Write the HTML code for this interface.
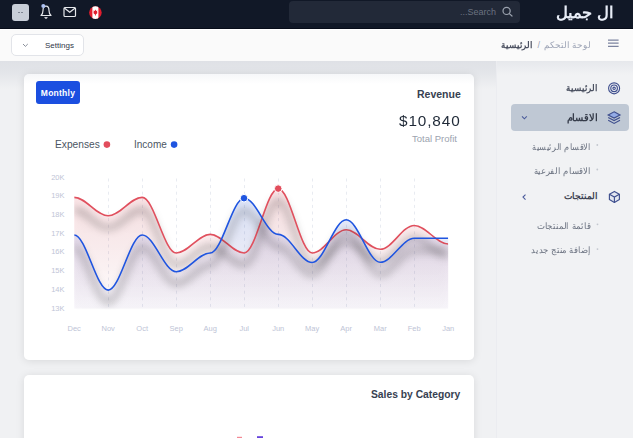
<!DOCTYPE html>
<html><head><meta charset="utf-8">
<style>
*{margin:0;padding:0;box-sizing:border-box}
html,body{width:633px;height:438px;overflow:hidden}
body{position:relative;background:#f0f1f3;font-family:"Liberation Sans",sans-serif;}
.abs{position:absolute}
.t{position:absolute;white-space:nowrap;line-height:1}
.ar{direction:rtl;text-align:right}
#top{left:0;top:0;width:633px;height:29px;background:#111827;border-bottom:1px solid #070c19}
#avatar{left:12px;top:4px;width:17px;height:17px;background:#c8ced8;border-radius:3px}
#search{left:289px;top:1px;width:231px;height:22px;background:#222938;border-radius:4px}
#crumb{left:0;top:29px;width:633px;height:32px;background:#fafafa;border-top:1px solid #fff}
#settings{left:11px;top:34px;width:73px;height:22px;background:#fff;border:1px solid #e2e4e9;border-radius:5px}
#shade2{left:497px;top:61px;width:136px;height:14px;background:linear-gradient(#e6e8ec,rgba(241,242,244,0))}
#shade{left:0;top:61px;width:496px;height:28px;background:linear-gradient(#dfe1e6,#e3e5e9 11px,rgba(240,241,243,0))}
#side{left:496px;top:61px;width:137px;height:377px;background:#f1f2f4;border-left:1px solid #ebecf0}
.card{background:#fff;border-radius:5px;box-shadow:0 1px 8px rgba(0,0,0,0.1)}
#card1{left:24px;top:74px;width:450px;height:286px;background:linear-gradient(#f6f7f9,#fff 10px)}
#card2{left:24px;top:375px;width:450px;height:80px}
#monthly{left:36px;top:81px;width:44px;height:23px;background:#1b4fe0;border-radius:3px;color:#fff;font-weight:bold;font-size:8.5px;letter-spacing:0.25px;line-height:24.5px;text-align:center}
#active{left:511px;top:104px;width:118px;height:27px;background:#bfc8d4;border-radius:4px}
</style></head><body>
<div class="abs" id="top"></div>
<div class="abs" id="avatar"></div>
<div class="abs" id="search"></div>
<div class="t ar" dir="rtl" style="right:137px;top:8px;font-size:9px;color:#6b7280">Search...</div>
<div class="t ar" style="right:20px;top:5px;font-size:16px;font-weight:bold;color:#e8edf7;transform:scaleX(1.02);transform-origin:right center">ال جميل</div>
<div class="abs" id="crumb"></div>
<div class="abs" id="settings"></div>
<div class="t" style="left:45px;top:41.7px;font-size:8px;color:#2f3647">Settings</div>
<div class="t ar" style="right:42px;top:40.5px;font-size:9px;color:#9ca3b5;transform:scaleX(0.979);transform-origin:right center">لوحة التحكم</div>
<div class="t" style="left:537.5px;top:40.5px;font-size:9px;color:#9ca3b5">/</div>
<div class="t ar" style="right:100.5px;top:40.5px;font-size:9px;font-weight:bold;color:#4b5060;transform:scaleX(0.96);transform-origin:right center">الرئيسية</div>
<div class="abs" id="side"></div>
<div class="abs" id="shade"></div>
<div class="abs" id="shade2"></div>
<div class="abs card" id="card1"></div>
<div class="abs card" id="card2"></div>
<div class="abs" id="monthly">Monthly</div>
<div class="t" style="left:417px;top:89px;font-size:10.5px;font-weight:bold;color:#374151">Revenue</div>
<div class="t" style="left:399px;top:114px;font-size:14px;letter-spacing:0.8px;color:#1f2937;transform:scaleX(1.095);transform-origin:left center">$10,840</div>
<div class="t" style="left:412px;top:134px;font-size:9.5px;color:#9ca3af">Total Profit</div>
<div class="t" style="left:55px;top:140px;font-size:10.2px;color:#4b5563">Expenses</div>
<div class="t" style="left:134px;top:140px;font-size:10px;color:#4b5563">Income</div>
<div class="t" style="left:371px;top:390px;font-size:10.3px;font-weight:bold;color:#374151">Sales by Category</div>
<div class="abs" id="active"></div>
<div class="t ar" style="right:35px;top:84px;font-size:9px;font-weight:bold;color:#4a5060;transform:scaleX(0.96);transform-origin:right center">الرئيسية</div>
<div class="t ar" style="right:35px;top:112.5px;font-size:9.5px;font-weight:bold;color:#363c4a;transform:scaleX(0.984);transform-origin:right center">الاقسام</div>
<div class="t ar" style="right:42px;top:142.5px;font-size:9px;color:#6b7280;transform:scaleX(0.906);transform-origin:right center">الاقسام الرئيسية</div>
<div class="t ar" style="right:42px;top:167px;font-size:9px;color:#6b7280;transform:scaleX(0.942);transform-origin:right center">الاقسام الفرعية</div>
<div class="t ar" style="right:35px;top:192px;font-size:9px;font-weight:bold;color:#3d4352;transform:scaleX(1.0);transform-origin:right center">المنتجات</div>
<div class="t ar" style="right:42px;top:221.5px;font-size:9px;color:#6b7280;transform:scaleX(0.947);transform-origin:right center">قائمة المنتجات</div>
<div class="t ar" style="right:42px;top:245.5px;font-size:9px;color:#6b7280;transform:scaleX(0.937);transform-origin:right center">إضافة منتج جديد</div>
<svg class="abs" style="left:0;top:0" width="633" height="438" viewBox="0 0 633 438">
<!-- avatar marks -->
<path d="M18,12.5 h2 M21,12.5 h2" stroke="#6b7280" stroke-width="0.8"/>
<!-- bell -->
<g fill="none" stroke="#e5e7eb" stroke-width="1.2" stroke-linejoin="round" stroke-linecap="round">
<path d="M41,15.5 C42.6,14.2 43,12.5 43,10.5 C43,7.6 44.4,6.2 46,6.2 C47.6,6.2 49,7.6 49,10.5 C49,12.5 49.4,14.2 51,15.5 Z"/>
<path d="M45,17.6 L46,18.3 L47,17.6"/>
</g>
<circle cx="43.3" cy="5.9" r="2" fill="#aec2f3"/>
<!-- mail -->
<g fill="none" stroke="#e5e7eb" stroke-width="1.2" stroke-linejoin="round">
<rect x="64" y="7.5" width="11.5" height="9" rx="1"/>
<path d="M64.3,8 L69.75,12.3 L75.2,8"/>
</g>
<!-- flag -->
<defs><clipPath id="fc"><circle cx="95.4" cy="12.6" r="6.3"/></clipPath></defs>
<g clip-path="url(#fc)">
<rect x="88" y="5" width="15" height="16" fill="#e11d2e"/>
<rect x="92.4" y="5" width="6" height="16" fill="#fff"/>
<path d="M95.4,9.6 L96.2,11 L97.4,10.6 L96.9,12.6 L97.8,12.8 L95.8,14.4 L95.8,15.6 L95,15.6 L95,14.4 L93,12.8 L93.9,12.6 L93.4,10.6 L94.6,11 Z" fill="#e11d2e"/>
</g>
<!-- search icon -->
<g fill="none" stroke="#9ca3af" stroke-width="1.2" stroke-linecap="round">
<circle cx="506.6" cy="10.9" r="3.6"/>
<path d="M509.3,13.6 L512,16"/>
</g>
<!-- settings chevron -->
<path d="M23,44 L25.4,46.4 L27.8,44" fill="none" stroke="#6b7280" stroke-width="0.8"/>
<!-- hamburger -->
<g stroke="#7c84a0" stroke-width="1.2"><path d="M608,40.1 H618.6 M608,43.2 H618.6 M608,46.3 H618.6"/></g>
<!-- sidebar icons -->
<g fill="none" stroke="#3f4f8e" stroke-width="1.15">
<circle cx="614.1" cy="88.3" r="5.5"/><circle cx="614.1" cy="88.3" r="3.3"/><circle cx="614.1" cy="88.3" r="1.2"/>
<path d="M614.1,111.8 L620,114.9 L614.1,118 L608.2,114.9 Z" fill="#93abe6"/>
<path d="M608.2,117.4 L614.1,120.6 L620,117.4"/>
<path d="M608.2,120.2 L614.1,123.4 L620,120.2"/>
<path d="M614.4,191.4 L619.4,194.2 L619.4,199.6 L614.4,202.4 L609.4,199.6 L609.4,194.2 Z" fill="#e3e7f0" stroke-linejoin="round"/>
<path d="M609.4,194.2 L614.4,197 L619.4,194.2 M614.4,197 V202.4"/>
</g>
<path d="M522,116.4 L524.4,118.8 L526.8,116.4" fill="none" stroke="#4a5a9a" stroke-width="1.1"/>
<path d="M525.5,194.6 L523,197.1 L525.5,199.6" fill="none" stroke="#4a5a9a" stroke-width="1.1"/>
<g fill="#c3c7cf"><circle cx="597.3" cy="145" r="0.9"/><circle cx="597.3" cy="169.5" r="0.9"/><circle cx="597.5" cy="224.3" r="0.9"/><circle cx="597.5" cy="249.1" r="0.9"/></g>
<!-- sales chart hints -->
<rect x="237" y="436.8" width="5" height="1.2" fill="#f06b7a" opacity="0.8"/>
<rect x="257" y="436.2" width="6" height="1.8" fill="#4b22d6" opacity="0.85"/>
</svg>
<svg class="abs" style="left:0;top:0" width="633" height="438" viewBox="0 0 633 438">
<defs>
<linearGradient id="gr" x1="0" y1="0" x2="0" y2="1"><stop offset="0" stop-color="#e0505e" stop-opacity="0.17"/><stop offset="1" stop-color="#e0505e" stop-opacity="0.01"/></linearGradient>
<linearGradient id="gb" x1="0" y1="0" x2="0" y2="1"><stop offset="0" stop-color="#2a5ce0" stop-opacity="0.16"/><stop offset="1" stop-color="#5a50c0" stop-opacity="0.04"/></linearGradient>
<clipPath id="pc"><rect x="74.2" y="160" width="374" height="149.6"/></clipPath><filter id="ds" x="-10%" y="-40%" width="120%" height="180%" color-interpolation-filters="sRGB"><feOffset in="SourceAlpha" dx="0" dy="12" result="o"/><feGaussianBlur in="o" stdDeviation="4.5" result="b"/><feFlood flood-color="#000" flood-opacity="0.8"/><feComposite in2="b" operator="in" result="s"/><feMerge><feMergeNode in="s"/><feMergeNode in="SourceGraphic"/></feMerge></filter><filter id="ds2" x="-10%" y="-40%" width="120%" height="180%"><feOffset in="SourceAlpha" dx="0" dy="12" result="o"/><feGaussianBlur in="o" stdDeviation="4.5" result="b"/><feFlood flood-color="#000" flood-opacity="1"/><feComposite in2="b" operator="in"/></filter>
</defs>
<g font-family="Liberation Sans" font-size="7.5" fill="#bec4d6"><text x="64.5" y="179.6" text-anchor="end">20K</text><text x="64.5" y="198.3" text-anchor="end">19K</text><text x="64.5" y="217.0" text-anchor="end">18K</text><text x="64.5" y="235.7" text-anchor="end">17K</text><text x="64.5" y="254.4" text-anchor="end">16K</text><text x="64.5" y="273.1" text-anchor="end">15K</text><text x="64.5" y="291.8" text-anchor="end">14K</text><text x="64.5" y="310.5" text-anchor="end">13K</text><text x="74.2" y="331" text-anchor="middle">Dec</text><text x="108.2" y="331" text-anchor="middle">Nov</text><text x="142.2" y="331" text-anchor="middle">Oct</text><text x="176.2" y="331" text-anchor="middle">Sep</text><text x="210.2" y="331" text-anchor="middle">Aug</text><text x="244.2" y="331" text-anchor="middle">Jul</text><text x="278.2" y="331" text-anchor="middle">Jun</text><text x="312.2" y="331" text-anchor="middle">May</text><text x="346.2" y="331" text-anchor="middle">Apr</text><text x="380.2" y="331" text-anchor="middle">Mar</text><text x="414.2" y="331" text-anchor="middle">Feb</text><text x="448.2" y="331" text-anchor="middle">Jan</text></g>
<line x1="108.5" y1="178.5" x2="108.5" y2="307.5" stroke="#e8ebf1" stroke-width="1" stroke-dasharray="3 3.6"/><line x1="142.5" y1="178.5" x2="142.5" y2="307.5" stroke="#e8ebf1" stroke-width="1" stroke-dasharray="3 3.6"/><line x1="176.5" y1="178.5" x2="176.5" y2="307.5" stroke="#e8ebf1" stroke-width="1" stroke-dasharray="3 3.6"/><line x1="210.5" y1="178.5" x2="210.5" y2="307.5" stroke="#e8ebf1" stroke-width="1" stroke-dasharray="3 3.6"/><line x1="244.5" y1="178.5" x2="244.5" y2="307.5" stroke="#e8ebf1" stroke-width="1" stroke-dasharray="3 3.6"/><line x1="278.5" y1="178.5" x2="278.5" y2="307.5" stroke="#e8ebf1" stroke-width="1" stroke-dasharray="3 3.6"/><line x1="312.5" y1="178.5" x2="312.5" y2="307.5" stroke="#e8ebf1" stroke-width="1" stroke-dasharray="3 3.6"/><line x1="346.5" y1="178.5" x2="346.5" y2="307.5" stroke="#e8ebf1" stroke-width="1" stroke-dasharray="3 3.6"/><line x1="380.5" y1="178.5" x2="380.5" y2="307.5" stroke="#e8ebf1" stroke-width="1" stroke-dasharray="3 3.6"/><line x1="414.5" y1="178.5" x2="414.5" y2="307.5" stroke="#e8ebf1" stroke-width="1" stroke-dasharray="3 3.6"/>
<path d="M74.2,197.4 C86.1,197.4 96.3,215.8 108.2,215.8 C120.1,215.8 130.3,197.4 142.2,197.4 C154.1,197.4 164.3,253.0 176.2,253.0 C188.1,253.0 198.3,234.4 210.2,234.4 C222.1,234.4 232.3,253.0 244.2,253.0 C256.1,253.0 266.3,188.6 278.2,188.6 C290.1,188.6 300.3,253.0 312.2,253.0 C324.1,253.0 334.3,229.8 346.2,229.8 C358.1,229.8 368.3,249.3 380.2,249.3 C392.1,249.3 402.3,225.5 414.2,225.5 C426.1,225.5 436.3,244.0 448.2,244.0 L448.2,308.6 L74.2,308.6 Z" fill="url(#gr)"/>
<path d="M74.2,235.0 C86.1,235.0 96.3,290.1 108.2,290.1 C120.1,290.1 130.3,235.0 142.2,235.0 C154.1,235.0 164.3,271.7 176.2,271.7 C188.1,271.7 198.3,253.0 210.2,253.0 C222.1,253.0 232.3,198.2 244.2,198.2 C256.1,198.2 266.3,234.4 278.2,234.4 C290.1,234.4 300.3,262.5 312.2,262.5 C324.1,262.5 334.3,219.8 346.2,219.8 C358.1,219.8 368.3,262.3 380.2,262.3 C392.1,262.3 402.3,238.3 414.2,238.3 C426.1,238.3 436.3,238.3 448.2,238.3 L448.2,308.6 L74.2,308.6 Z" fill="url(#gb)"/>
<g clip-path="url(#pc)"><g filter="url(#ds2)" opacity="0.15"><path d="M74.2,197.4 C86.1,197.4 96.3,215.8 108.2,215.8 C120.1,215.8 130.3,197.4 142.2,197.4 C154.1,197.4 164.3,253.0 176.2,253.0 C188.1,253.0 198.3,234.4 210.2,234.4 C222.1,234.4 232.3,253.0 244.2,253.0 C256.1,253.0 266.3,188.6 278.2,188.6 C290.1,188.6 300.3,253.0 312.2,253.0 C324.1,253.0 334.3,229.8 346.2,229.8 C358.1,229.8 368.3,249.3 380.2,249.3 C392.1,249.3 402.3,225.5 414.2,225.5 C426.1,225.5 436.3,244.0 448.2,244.0 L448.2,308.6 L74.2,308.6 Z" fill="url(#gr)"/><path d="M74.2,235.0 C86.1,235.0 96.3,290.1 108.2,290.1 C120.1,290.1 130.3,235.0 142.2,235.0 C154.1,235.0 164.3,271.7 176.2,271.7 C188.1,271.7 198.3,253.0 210.2,253.0 C222.1,253.0 232.3,198.2 244.2,198.2 C256.1,198.2 266.3,234.4 278.2,234.4 C290.1,234.4 300.3,262.5 312.2,262.5 C324.1,262.5 334.3,219.8 346.2,219.8 C358.1,219.8 368.3,262.3 380.2,262.3 C392.1,262.3 402.3,238.3 414.2,238.3 C426.1,238.3 436.3,238.3 448.2,238.3 L448.2,308.6 L74.2,308.6 Z" fill="url(#gb)"/></g>
<g filter="url(#ds)"><path d="M74.2,197.4 C86.1,197.4 96.3,215.8 108.2,215.8 C120.1,215.8 130.3,197.4 142.2,197.4 C154.1,197.4 164.3,253.0 176.2,253.0 C188.1,253.0 198.3,234.4 210.2,234.4 C222.1,234.4 232.3,253.0 244.2,253.0 C256.1,253.0 266.3,188.6 278.2,188.6 C290.1,188.6 300.3,253.0 312.2,253.0 C324.1,253.0 334.3,229.8 346.2,229.8 C358.1,229.8 368.3,249.3 380.2,249.3 C392.1,249.3 402.3,225.5 414.2,225.5 C426.1,225.5 436.3,244.0 448.2,244.0" fill="none" stroke="#e0505e" stroke-width="1.6"/></g>
<g filter="url(#ds)"><path d="M74.2,235.0 C86.1,235.0 96.3,290.1 108.2,290.1 C120.1,290.1 130.3,235.0 142.2,235.0 C154.1,235.0 164.3,271.7 176.2,271.7 C188.1,271.7 198.3,253.0 210.2,253.0 C222.1,253.0 232.3,198.2 244.2,198.2 C256.1,198.2 266.3,234.4 278.2,234.4 C290.1,234.4 300.3,262.5 312.2,262.5 C324.1,262.5 334.3,219.8 346.2,219.8 C358.1,219.8 368.3,262.3 380.2,262.3 C392.1,262.3 402.3,238.3 414.2,238.3 C426.1,238.3 436.3,238.3 448.2,238.3" fill="none" stroke="#1f55e0" stroke-width="1.6"/></g></g>
<circle cx="244" cy="198.2" r="3.8" fill="#1f55e0" stroke="#fff" stroke-width="1"/>
<circle cx="278.2" cy="188.6" r="3.8" fill="#e24d5c" stroke="#fff" stroke-width="1"/>
<circle cx="106.9" cy="144.6" r="3.3" fill="#e24d5c"/>
<circle cx="174.1" cy="144.6" r="3.3" fill="#1f55e0"/>
</svg>
</body></html>
